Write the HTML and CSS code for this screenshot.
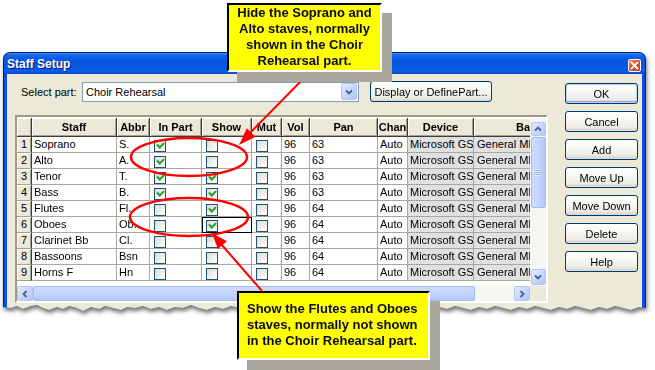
FILE: index.html
```html
<!DOCTYPE html>
<html>
<head>
<meta charset="utf-8">
<title>Staff Setup</title>
<link rel="stylesheet" href="styles.css">
</head>
<body>
<div class="page">
  <div class="win-shadow">
    <div class="window">
      <div class="titlebar">
        <span class="title">Staff Setup</span>
        <span class="close"><svg width="9" height="9" viewBox="0 0 9 9"><path d="M1.5 1.5L7.5 7.5M7.5 1.5L1.5 7.5" stroke="#fff" stroke-width="1.8" stroke-linecap="square"/></svg></span>
      </div>
      <div class="client">
        <div class="main">
          <div class="toprow">
            <span class="label">Select part:</span>
            <div class="combo">
              <span class="combo-text">Choir Rehearsal</span>
              <span class="sbtn dd"><svg width="8" height="6" viewBox="0 0 8 6"><path d="M1 1.5L4 4.5L7 1.5" fill="none" stroke="#4D6185" stroke-width="1.8"/></svg></span>
            </div>
            <button class="btn btn-wide">Display or DefinePart...</button>
          </div>
          <div class="gridbox">
            <div class="gridview">
              <div class="row head">
                <div class="hc"></div><div class="hc">Staff</div><div class="hc">Abbr</div><div class="hc">In Part</div><div class="hc">Show</div><div class="hc">Mut</div><div class="hc">Vol</div><div class="hc">Pan</div><div class="hc">Chan</div><div class="hc">Device</div><div class="hc last">Ba</div>
              </div>
              <div class="row">
                <div class="rn">1</div><div class="c">Soprano</div><div class="c">S.</div><div class="c"><span class="cb on"></span></div><div class="c"><span class="cb"></span></div><div class="c"><span class="cb"></span></div><div class="c">96</div><div class="c">63</div><div class="c">Auto</div><div class="c g">Microsoft GS</div><div class="c g last">General MI</div>
              </div>
              <div class="row">
                <div class="rn">2</div><div class="c">Alto</div><div class="c">A.</div><div class="c"><span class="cb on"></span></div><div class="c"><span class="cb"></span></div><div class="c"><span class="cb"></span></div><div class="c">96</div><div class="c">63</div><div class="c">Auto</div><div class="c g">Microsoft GS</div><div class="c g last">General MI</div>
              </div>
              <div class="row">
                <div class="rn">3</div><div class="c">Tenor</div><div class="c">T.</div><div class="c"><span class="cb on"></span></div><div class="c"><span class="cb on"></span></div><div class="c"><span class="cb"></span></div><div class="c">96</div><div class="c">63</div><div class="c">Auto</div><div class="c g">Microsoft GS</div><div class="c g last">General MI</div>
              </div>
              <div class="row">
                <div class="rn">4</div><div class="c">Bass</div><div class="c">B.</div><div class="c"><span class="cb on"></span></div><div class="c"><span class="cb on"></span></div><div class="c"><span class="cb"></span></div><div class="c">96</div><div class="c">63</div><div class="c">Auto</div><div class="c g">Microsoft GS</div><div class="c g last">General MI</div>
              </div>
              <div class="row">
                <div class="rn">5</div><div class="c">Flutes</div><div class="c">Fl.</div><div class="c"><span class="cb"></span></div><div class="c"><span class="cb on"></span></div><div class="c"><span class="cb"></span></div><div class="c">96</div><div class="c">64</div><div class="c">Auto</div><div class="c g">Microsoft GS</div><div class="c g last">General MI</div>
              </div>
              <div class="row">
                <div class="rn">6</div><div class="c">Oboes</div><div class="c">Ob.</div><div class="c"><span class="cb"></span></div><div class="c focus"><span class="cb on"></span></div><div class="c"><span class="cb"></span></div><div class="c">96</div><div class="c">64</div><div class="c">Auto</div><div class="c g">Microsoft GS</div><div class="c g last">General MI</div>
              </div>
              <div class="row">
                <div class="rn">7</div><div class="c">Clarinet Bb</div><div class="c">Cl.</div><div class="c"><span class="cb"></span></div><div class="c"><span class="cb"></span></div><div class="c"><span class="cb"></span></div><div class="c">96</div><div class="c">64</div><div class="c">Auto</div><div class="c g">Microsoft GS</div><div class="c g last">General MI</div>
              </div>
              <div class="row">
                <div class="rn">8</div><div class="c">Bassoons</div><div class="c">Bsn</div><div class="c"><span class="cb"></span></div><div class="c"><span class="cb"></span></div><div class="c"><span class="cb"></span></div><div class="c">96</div><div class="c">64</div><div class="c">Auto</div><div class="c g">Microsoft GS</div><div class="c g last">General MI</div>
              </div>
              <div class="row">
                <div class="rn">9</div><div class="c">Horns F</div><div class="c">Hn</div><div class="c"><span class="cb"></span></div><div class="c"><span class="cb"></span></div><div class="c"><span class="cb"></span></div><div class="c">96</div><div class="c">64</div><div class="c">Auto</div><div class="c g">Microsoft GS</div><div class="c g last">General MI</div>
              </div>
            </div>
            <div class="vscroll">
              <span class="sbtn up"><svg width="8" height="6" viewBox="0 0 8 6"><path d="M1 4.5L4 1.5L7 4.5" fill="none" stroke="#4D6185" stroke-width="1.8"/></svg></span>
              <span class="vthumb"><span class="grip-h"></span></span>
              <span class="sbtn down"><svg width="8" height="6" viewBox="0 0 8 6"><path d="M1 1.5L4 4.5L7 1.5" fill="none" stroke="#4D6185" stroke-width="1.8"/></svg></span>
            </div>
            <div class="hscroll">
              <span class="sbtn left"><svg width="6" height="8" viewBox="0 0 6 8"><path d="M4.5 1L1.5 4L4.5 7" fill="none" stroke="#4D6185" stroke-width="1.8"/></svg></span>
              <span class="hthumb"><span class="grip-v"></span></span>
              <span class="sbtn right"><svg width="6" height="8" viewBox="0 0 6 8"><path d="M1.5 1L4.5 4L1.5 7" fill="none" stroke="#4D6185" stroke-width="1.8"/></svg></span>
            </div>
            <div class="corner"></div>
          </div>
        </div>
        <div class="side">
          <button class="btn default">OK</button>
          <button class="btn">Cancel</button>
          <button class="btn">Add</button>
          <button class="btn">Move Up</button>
          <button class="btn">Move Down</button>
          <button class="btn">Delete</button>
          <button class="btn">Help</button>
        </div>
      </div>
    </div>
  </div>

  <svg class="marks" width="655" height="370" viewBox="0 0 655 370">
    <ellipse cx="189" cy="157" rx="58" ry="19" fill="none" stroke="#ff0000" stroke-width="2.5"/>
    <ellipse cx="189" cy="217" rx="59" ry="19" fill="none" stroke="#ff0000" stroke-width="2.5"/>
    <line x1="308" y1="74" x2="248" y2="135" stroke="#ff0000" stroke-width="2"/>
    <polygon points="239,145 246.9,128.3 255.5,136.7" fill="#ff0000"/>
    <line x1="262" y1="291" x2="221" y2="244" stroke="#ff0000" stroke-width="2"/>
    <polygon points="212,233 226.9,241.2 217.9,249" fill="#ff0000"/>
  </svg>

  <div class="callout c1">Hide the Soprano and<br>Alto staves, normally<br>shown in the Choir<br>Rehearsal part.</div>
  <div class="callout c2">Show the Flutes and Oboes<br>staves, normally not shown<br>in the Choir Rehearsal part.</div>
</div>
</body>
</html>
```

FILE: styles.css
```css
html, body {
  margin: 0;
  background: #ffffff;
}

body {
  font-family: "Liberation Sans", Arial, sans-serif;
  font-size: 11px;
  color: #000;
}

.page {
  position: relative;
  width: 655px;
  height: 370px;
  overflow: hidden;
  box-sizing: border-box;
  padding: 52px 0 0 3px;
}

/* ---------- window ---------- */
.win-shadow {
  width: 643px;
  filter: drop-shadow(1px 3px 2px rgba(0, 0, 0, 0.55));
}

.window {
  width: 643px;
  height: 262px;
  box-sizing: border-box;
  border: 1px solid #0A1F7A;
  border-bottom: 0;
  border-radius: 7px 7px 0 0;
  background: #0B4FDB;
  display: flex;
  flex-direction: column;
  clip-path: polygon(0 0, 643px 0, 643px 256px,
    636px 255px, 628px 258px, 620px 256px, 612px 254px, 604px 257px, 596px 255px, 588px 258px,
    580px 256px, 572px 254px, 564px 257px, 556px 255px, 548px 258px, 540px 256px, 532px 254px,
    524px 257px, 516px 255px, 508px 258px, 500px 256px, 492px 254px, 484px 257px, 476px 255px,
    468px 258px, 460px 256px, 452px 254px, 444px 257px, 436px 255px, 428px 258px, 420px 256px,
    412px 254px, 404px 257px, 396px 255px, 388px 252px, 380px 257px, 372px 255px, 364px 258px,
    356px 256px, 348px 254px, 340px 257px, 332px 255px, 324px 258px, 316px 256px, 308px 254px,
    300px 257px, 292px 255px, 284px 258px, 276px 256px, 268px 254px, 260px 257px, 252px 255px,
    244px 258px, 236px 256px, 228px 254px, 220px 257px, 212px 255px, 204px 258px, 196px 256px,
    188px 253px, 180px 256px, 172px 255px, 164px 258px, 156px 255px, 148px 257px, 140px 254px,
    132px 256px, 124px 255px, 118px 258px, 110px 256px, 102px 254px, 96px 257px, 88px 255px,
    80px 259px, 74px 256px, 66px 254px, 60px 257px, 54px 255px, 46px 258px, 40px 256px,
    34px 253px, 28px 254px, 20px 257px, 14px 254px, 8px 256px, 0 255px);
}

.titlebar {
  height: 21px;
  flex: none;
  display: flex;
  align-items: center;
  justify-content: space-between;
  padding: 0 4px 0 3px;
  border-radius: 6px 6px 0 0;
  background: linear-gradient(#3D8DF5 0%, #1468EC 10%, #0858E2 30%, #0655DF 60%, #0A5EEA 85%, #0848C9 100%);
}

.title {
  color: #fff;
  font-family: "Liberation Sans", Arial, sans-serif;
  font-weight: bold;
  font-size: 12px;
  text-shadow: 1px 1px 0 #0A1883;
}

.close {
  width: 13px;
  height: 13px;
  margin-top: 3px;
  box-sizing: border-box;
  border: 1px solid #fff;
  border-radius: 2px;
  background: linear-gradient(135deg, #F08A6C 0%, #E0542C 45%, #C8381A 100%);
  display: flex;
  align-items: center;
  justify-content: center;
}

.close svg {
  display: block;
}

.client {
  flex: 1;
  margin: 0 3px;
  background: #ECE9D8;
  display: flex;
  gap: 17px;
  padding: 7px 0 0 8px;
}

.main {
  width: 533px;
  flex: none;
}

/* ---------- top row ---------- */
.toprow {
  height: 21px;
  display: flex;
  align-items: center;
}

.label {
  width: 61px;
  flex: none;
  padding-left: 6px;
}

.combo {
  width: 277px;
  height: 20px;
  flex: none;
  box-sizing: border-box;
  border: 1px solid #7F9DB9;
  background: #fff;
  display: flex;
  align-items: center;
  justify-content: space-between;
  padding: 0 1px 0 3px;
}

.combo-text {
  font-size: 11px;
}

button {
  font-family: "Liberation Sans", Arial, sans-serif;
  font-size: 11px;
  color: #000;
  margin: 0;
  padding: 0;
}

.btn {
  height: 21px;
  box-sizing: border-box;
  border: 1px solid #003C74;
  border-radius: 3px;
  background: linear-gradient(#FFFFFF 0%, #F6F6F2 45%, #ECEBE5 80%, #D8D3C8 100%);
  white-space: nowrap;
}

.btn-wide {
  width: 122px;
  margin-left: 11px;
}

.btn.default {
  box-shadow: inset 0 0 0 1px #BCD0F5, inset 0 -1px 0 1px #8FA9E4;
}

/* ---------- side buttons ---------- */
.side {
  width: 73px;
  flex: none;
  display: flex;
  flex-direction: column;
  gap: 7px;
  padding-top: 2px;
}

.side .btn {
  width: 73px;
}

/* ---------- grid ---------- */
.gridbox {
  margin-top: 13px;
  width: 533px;
  height: 188px;
  box-sizing: border-box;
  border-style: solid;
  border-width: 2px;
  border-color: #9D9A8C #FFFFFF #FFFFFF #9D9A8C;
  background: #fff;
  padding-top: 1px;
  display: grid;
  grid-template-columns: 513px 16px;
  grid-template-rows: 168px 15px;
}

.gridview {
  overflow: hidden;
  background: #fff;
}

.row {
  width: 513px;
  display: grid;
  grid-template-columns: 15px 85px 33px 52px 50px 30px 28px 68px 30px 66px 56px;
  height: 16px;
}

.row.head {
  height: 19px;
}

.hc {
  box-sizing: border-box;
  background: #ECE9D8;
  border-right: 1px solid #3C3C3C;
  border-bottom: 1px solid #3C3C3C;
  box-shadow: inset 1px 1px 0 #FFFFFF, inset -1px -1px 0 #A5A293;
  font-weight: bold;
  text-align: center;
  line-height: 18px;
  white-space: nowrap;
  overflow: hidden;
}

.hc.last {
  text-align: right;
  border-right: 0;
  box-shadow: inset 1px 1px 0 #FFFFFF, inset 0 -1px 0 #A5A293;
  padding-right: 0;
}

.rn {
  box-sizing: border-box;
  background: #ECE9D8;
  border-right: 1px solid #3C3C3C;
  border-bottom: 1px solid #A5A293;
  box-shadow: inset 1px 1px 0 #FFFFFF, inset -1px 0 0 #A5A293;
  text-align: center;
  line-height: 15px;
  font-size: 11px;
}

.c {
  box-sizing: border-box;
  border-right: 1px solid #ACA899;
  border-bottom: 1px solid #ACA899;
  padding: 0 2px;
  line-height: 15px;
  white-space: nowrap;
  overflow: hidden;
  background: #fff;
}

.c.g {
  background: #E1E1E1;
}

.c.last {
  border-right: 0;
  padding: 0 0 0 3px;
}

.c.focus {
  outline: 1px solid #000;
  outline-offset: -1px;
}

.cb {
  display: block;
  position: relative;
  width: 12px;
  height: 12px;
  margin: 3px 0 0 2px;
  box-sizing: border-box;
  border: 1px solid #1C5180;
  background: linear-gradient(135deg, #DCDBD5 0%, #F2F2EE 60%, #FFFFFF 100%);
}

.cb.on::after {
  content: "";
  position: absolute;
  left: 2px;
  top: 1px;
  width: 5px;
  height: 3px;
  border-left: 2px solid #21A121;
  border-bottom: 2px solid #21A121;
  transform: rotate(-45deg);
}

/* ---------- scrollbars ---------- */
.sbtn {
  flex: none;
  box-sizing: border-box;
  border: 1px solid #B4C7F1;
  border-radius: 2px;
  background: linear-gradient(135deg, #E4ECFE 0%, #C6D6FC 50%, #B3C7F6 100%);
  display: flex;
  align-items: center;
  justify-content: center;
}

.sbtn svg {
  display: block;
}

.dd {
  width: 16px;
  height: 17px;
}

.vscroll {
  background: #F6F6F2;
  display: flex;
  flex-direction: column;
  align-items: center;
  padding: 4px 0 1px 0;
}

.vscroll .up {
  width: 15px;
  height: 14px;
}

.vthumb {
  width: 15px;
  height: 71px;
  margin-top: 1px;
  box-sizing: border-box;
  border: 1px solid #A4BCEF;
  border-radius: 2px;
  background: linear-gradient(90deg, #CEDCFD 0%, #C0D2FB 60%, #B2C7F5 100%);
  display: flex;
  align-items: center;
  justify-content: center;
}

.grip-h {
  width: 6px;
  height: 7px;
  background: repeating-linear-gradient(#EEF3FE 0 1px, #8FAEF0 1px 2px);
}

.vscroll .down {
  width: 15px;
  height: 16px;
  margin-top: auto;
}

.hscroll {
  background: #F6F6F2;
  display: flex;
  align-items: center;
}

.hscroll .sbtn {
  width: 16px;
  height: 15px;
}

.hthumb {
  width: 442px;
  height: 15px;
  box-sizing: border-box;
  border: 1px solid #A4BCEF;
  border-radius: 2px;
  background: linear-gradient(#CEDCFD 0%, #C0D2FB 60%, #B2C7F5 100%);
  display: flex;
  align-items: center;
  justify-content: center;
}

.grip-v {
  width: 7px;
  height: 6px;
  background: repeating-linear-gradient(90deg, #EEF3FE 0 1px, #8FAEF0 1px 2px);
}

.hscroll .right {
  margin-left: auto;
}

.corner {
  background: #ECE9D8;
}

/* ---------- annotations ---------- */
.marks {
  position: absolute;
  left: 0;
  top: 0;
  pointer-events: none;
}

.callout {
  position: absolute;
  box-sizing: border-box;
  height: 69px;
  background: #FFFF00;
  border-style: solid;
  border-width: 2px;
  border-color: #000 #fff #fff #000;
  box-shadow: 10px 10px 0 #A9A69B;
  font-family: "Liberation Sans", Arial, sans-serif;
  font-weight: bold;
  font-size: 13px;
  line-height: 16px;
  color: #0A0A2A;
  white-space: nowrap;
}

.c1 {
  left: 227px;
  top: 3px;
  width: 155px;
  text-align: center;
}

.c2 {
  left: 237px;
  top: 291px;
  width: 193px;
  padding: 8px 0 0 8px;
  text-align: left;
}
```
